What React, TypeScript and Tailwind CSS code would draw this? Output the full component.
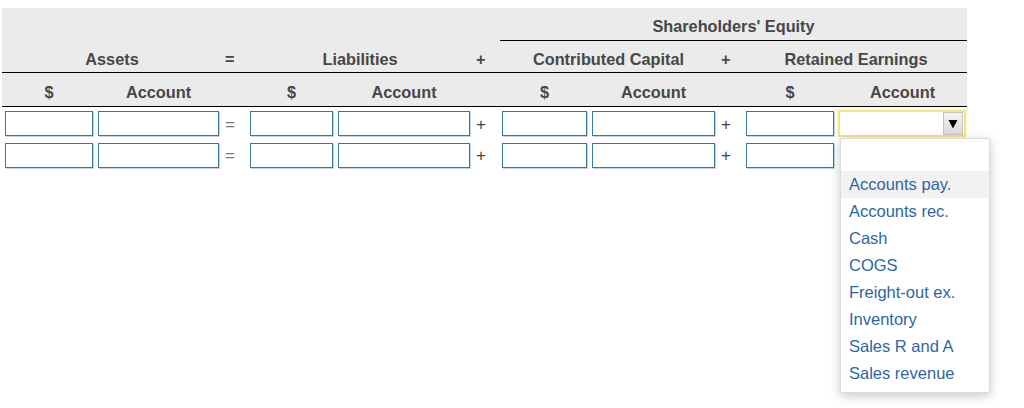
import { useState } from 'react';

const cols =
  'grid grid-cols-[88px_121px_21px_83px_132px_22px_85px_123px_21px_88px_127px] gap-x-[5px]';

const accountOptions = [
  'Accounts pay.',
  'Accounts rec.',
  'Cash',
  'COGS',
  'Freight-out ex.',
  'Inventory',
  'Sales R and A',
  'Sales revenue',
];

const TextBox = () => (
  <input
    type="text"
    className="h-[25px] w-full bg-white border border-[#3a7898] shadow-[1px_1px_0_#bcd6e6] outline-none"
  />
);

const Op = ({ sign }: { sign: string }) => (
  <div
    className={`pl-px text-[17px] leading-none self-center ${
      sign === '=' ? 'text-[#7a7a7a]' : 'text-[#444]'
    }`}
  >
    {sign}
  </div>
);

const AccountSelect = ({ open }: { open: boolean }) => {
  const [hovered, setHovered] = useState(0);
  return (
    <div className="relative">
      <div className="h-[27px] -mt-px -ml-px bg-white border-2 border-[#f6e27e] shadow-[0_0_2px_#f8ec9c] flex justify-end items-center pr-px">
        <div className="w-[20px] h-[23px] bg-gradient-to-b from-[#f4f4f4] to-[#d9d9d9] border border-[#c4c4c4] flex items-center justify-center">
          <svg width="10" height="10" viewBox="0 0 10 10">
            <polygon points="0.5,1 9.5,1 5,9.5" fill="#000" />
          </svg>
        </div>
      </div>
      {open && (
        <ul className="absolute z-10 left-[1px] top-[27px] w-[150px] bg-white border border-[#dcdcdc] shadow-[0_3px_10px_rgba(0,0,0,0.22)] py-[5px]">
          <li className="h-[27px]" />
          {accountOptions.map((opt, i) => (
            <li
              key={opt}
              onMouseEnter={() => setHovered(i)}
              className={`h-[27px] pl-[8px] flex items-center text-[16.5px] text-[#2d66a6] ${
                hovered === i ? 'bg-[#f2f2f2]' : ''
              }`}
            >
              {opt}
            </li>
          ))}
        </ul>
      )}
    </div>
  );
};

const EntryRow = ({ open }: { open: boolean }) => (
  <div className={`${cols} h-[25px]`}>
    <TextBox />
    <TextBox />
    <Op sign="=" />
    <TextBox />
    <TextBox />
    <Op sign="+" />
    <TextBox />
    <TextBox />
    <Op sign="+" />
    <TextBox />
    {open ? <AccountSelect open /> : <div />}
  </div>
);

export default function App() {
  return (
    <div
      className="w-[1024px] h-[408px] bg-white pt-2 overflow-hidden"
      style={{ fontFamily: '"Liberation Sans", Arial, sans-serif' }}
    >
      <div className="ml-[2px] w-[965px] bg-[#ebebeb] text-[16.3px] font-bold text-[#474747]">
        <div className={`${cols} pl-[3px] h-[33px]`}>
          <div className="col-start-7 col-span-5 -ml-[2px] -mr-[1px] border-b border-black flex items-center justify-center pt-[5px]">
            Shareholders' Equity
          </div>
        </div>
        <div className={`${cols} pl-[3px] h-[32px] border-b border-black items-center pt-[6px]`}>
          <div className="col-span-2 text-center">Assets</div>
          <div className="pl-px">=</div>
          <div className="col-span-2 text-center">Liabilities</div>
          <div className="pl-px">+</div>
          <div className="col-span-2 text-center">Contributed Capital</div>
          <div className="pl-px">+</div>
          <div className="col-span-2 text-center">Retained Earnings</div>
        </div>
        <div className={`${cols} pl-[3px] h-[34px] border-b border-black items-center pt-[6px]`}>
          <div className="text-center">$</div>
          <div className="text-center">Account</div>
          <div />
          <div className="text-center">$</div>
          <div className="text-center">Account</div>
          <div />
          <div className="text-center">$</div>
          <div className="text-center">Account</div>
          <div />
          <div className="text-center">$</div>
          <div className="text-center">Account</div>
        </div>
      </div>
      <div className="pl-[5px] pt-[4px] flex flex-col gap-y-[7px]">
        <EntryRow open />
        <EntryRow open={false} />
      </div>
    </div>
  );
}
